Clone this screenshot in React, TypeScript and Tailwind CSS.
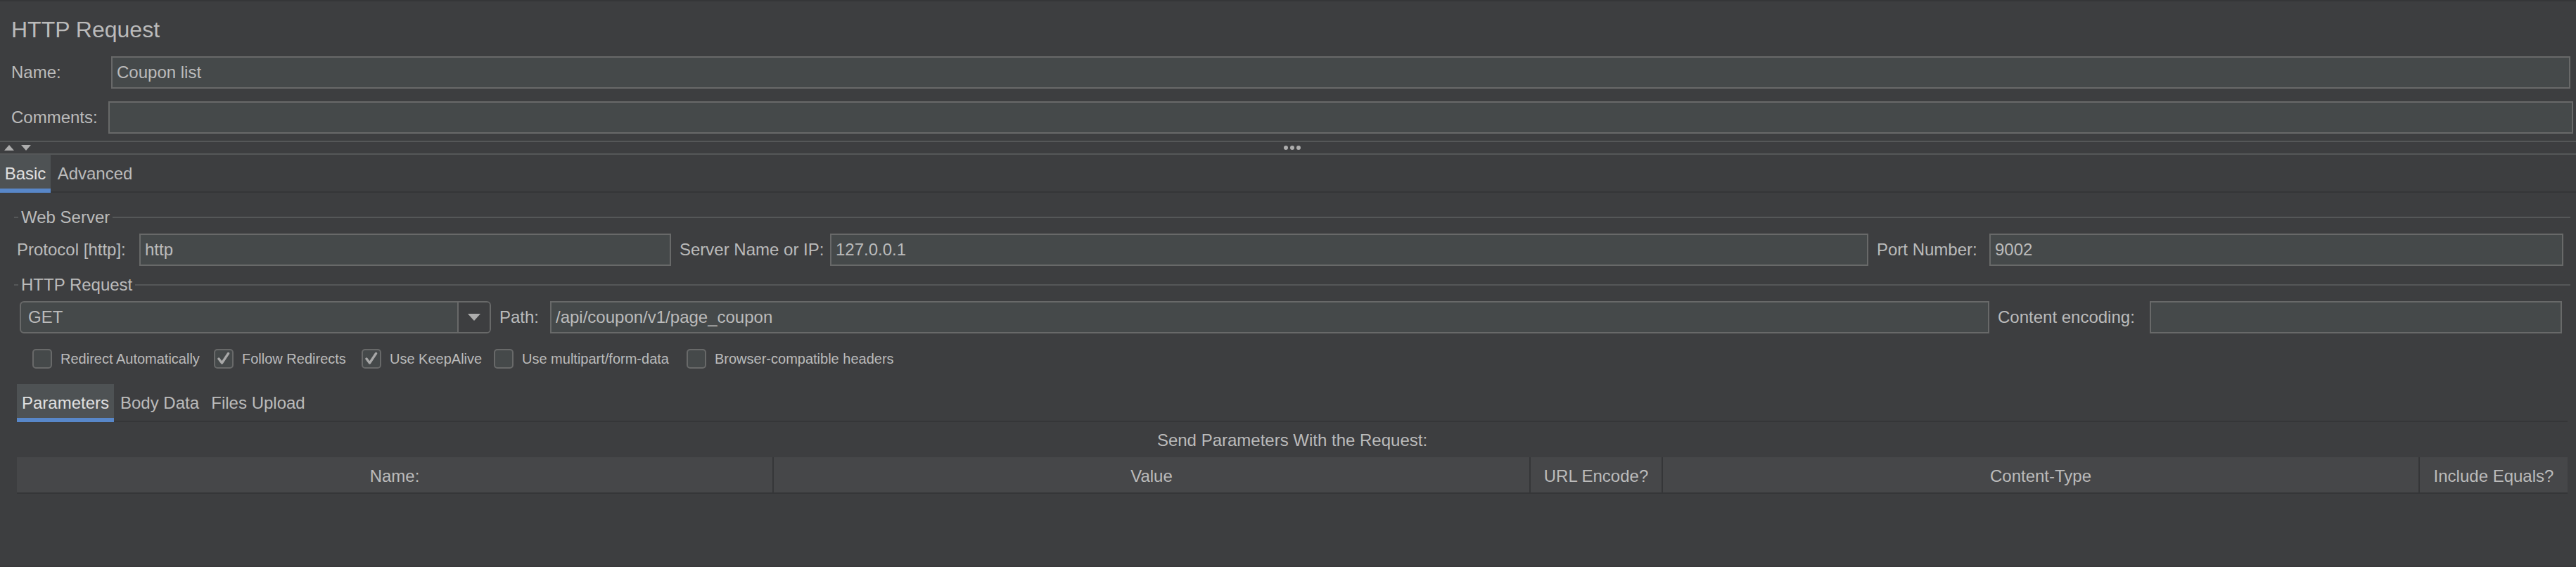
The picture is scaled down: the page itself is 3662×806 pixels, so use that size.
import { type ReactNode } from "react";

const field =
  "block h-[46px] w-full min-w-0 rounded-none border-2 border-[#686969] bg-[#45494a] pl-[6px] text-[24px] leading-[28px] text-[#bbbbbb] outline-none";

function Triangle({ up = false }: { up?: boolean }) {
  return (
    <svg width="14" height="8" viewBox="0 0 14 8" aria-hidden="true">
      <path d={up ? "M7 0L14 8H0Z" : "M0 0H14L7 8Z"} fill="#adadad" />
    </svg>
  );
}

function Tab({ children, active = false }: { children: ReactNode; active?: boolean }) {
  return (
    <button
      type="button"
      role="tab"
      aria-selected={active}
      className={
        active
          ? "h-[54px] border-b-[6px] border-[#5887c9] bg-[#4e5254] pt-[6px] text-[#e0e0e0]"
          : "h-[54px] border-b-2 border-[#353638] pt-[2px] text-[#bbbbbb]"
      }
    >
      {children}
    </button>
  );
}

function Group({ title, children }: { title: string; children: ReactNode }) {
  return (
    <section className="px-5">
      <div className="flex h-7 items-center gap-1">
        <span className="h-[2px] w-[6px] bg-[#555758]" />
        <h2>{title}</h2>
        <span className="-mr-3 h-[2px] flex-1 bg-[#555758]" />
      </div>
      {children}
    </section>
  );
}

function Check({ label, checked = false }: { label: string; checked?: boolean }) {
  return (
    <label className="flex items-center gap-3 whitespace-nowrap">
      <span className="grid size-7">
        <input
          type="checkbox"
          defaultChecked={checked}
          className="peer col-start-1 row-start-1 size-7 appearance-none rounded-[5px] border-2 border-[#686969] bg-[#45494a]"
        />
        <svg
          className="pointer-events-none invisible col-start-1 row-start-1 peer-checked:visible"
          viewBox="0 0 28 28"
          aria-hidden="true"
        >
          <path d="M7 14L11.5 20L20.5 6.5" fill="none" stroke="#a8a8a8" strokeWidth="3.4" strokeLinecap="round" strokeLinejoin="round" />
        </svg>
      </span>
      {label}
    </label>
  );
}

const columns = ["Name:", "Value", "URL Encode?", "Content-Type", "Include Equals?"];

export default function App() {
  return (
    <main className="flex min-h-screen flex-col border-y-2 border-t-[#353638] border-b-[#39393b] bg-[#3d3e40] font-['Liberation_Sans',Arial,sans-serif] text-[24px] leading-[28px] text-[#bbbbbb]">
      <header className="pl-4">
        <h1 className="pt-5 pb-[18px] text-[32px] leading-[40px]">HTTP Request</h1>
        <div className="grid grid-cols-[142px_1fr] items-center pr-2">
          <label htmlFor="name">Name:</label>
          <input id="name" defaultValue="Coupon list" className={field} />
        </div>
        <div className="mt-[18px] grid grid-cols-[138px_1fr] items-center pr-1">
          <label htmlFor="comments">Comments:</label>
          <input id="comments" className={field} />
        </div>
      </header>

      <div className="mt-[10px] grid h-5 grid-cols-[1fr_auto_1fr] items-center border-y-2 border-[#555758]">
        <div className="flex gap-[10px] pl-[6px]">
          <button type="button" aria-label="Collapse"><Triangle up /></button>
          <button type="button" aria-label="Expand"><Triangle /></button>
        </div>
        <div className="flex gap-[3px] pl-[12px]">
          <span className="size-[6px] rounded-full bg-[#adadad]" />
          <span className="size-[6px] rounded-full bg-[#adadad]" />
          <span className="size-[6px] rounded-full bg-[#adadad]" />
        </div>
        <span />
      </div>

      <div role="tablist" className="grid grid-cols-[72px_126px_1fr]">
        <Tab active>Basic</Tab>
        <Tab>Advanced</Tab>
        <span className="border-b-2 border-[#353638]" />
      </div>

      <div className="mt-[21px]">
        <Group title="Web Server">
          <div className="-mr-[2px] mt-[9px] grid grid-cols-[178px_756fr_226px_1476fr_172px_816fr] items-center">
            <label htmlFor="protocol" className="pl-1">Protocol [http]:</label>
            <input id="protocol" defaultValue="http" className={field} />
            <label htmlFor="server" className="pl-3">Server Name or IP:</label>
            <input id="server" defaultValue="127.0.0.1" className={field} />
            <label htmlFor="port" className="pl-3">Port Number:</label>
            <input id="port" defaultValue="9002" className={field} />
          </div>
        </Group>
      </div>

      <div className="mt-[13px]">
        <Group title="HTTP Request">
          <div className="mt-[9px] grid grid-cols-[670fr_84px_2046fr_228px_586fr] items-center pl-2">
            <div className="grid">
              <select
                aria-label="Method"
                className="col-start-1 row-start-1 h-[46px] w-full appearance-none rounded-[6px] border-2 border-[#686969] bg-[#45494a] pl-[10px] text-[24px] text-[#bbbbbb] outline-none"
              >
                <option>GET</option>
                <option>POST</option>
              </select>
              <span className="pointer-events-none col-start-1 row-start-1 my-[2px] mr-[2px] grid w-[46px] place-items-center justify-self-end rounded-r-[4px] border-l-2 border-[#686969] bg-[#3d3e40]">
                <svg width="18" height="10" viewBox="0 0 18 10" aria-hidden="true">
                  <path d="M0 0H18L9 10Z" fill="#adadad" />
                </svg>
              </span>
            </div>
            <label htmlFor="path" className="pl-3">Path:</label>
            <input id="path" defaultValue="/api/coupon/v1/page_coupon" className={field} />
            <label htmlFor="encoding" className="pl-3">Content encoding:</label>
            <input id="encoding" className={field} />
          </div>
          <div className="mt-[22px] grid grid-cols-[258px_210px_188px_274px_auto] justify-start pl-[26px] text-[20px]">
            <Check label="Redirect Automatically" />
            <Check label="Follow Redirects" checked />
            <Check label="Use KeepAlive" checked />
            <Check label="Use multipart/form-data" />
            <Check label="Browser-compatible headers" />
          </div>
        </Group>
      </div>

      <section className="mt-[22px] mr-3 ml-6">
        <div role="tablist" className="grid grid-cols-[138px_130px_150px_1fr]">
          <Tab active>Parameters</Tab>
          <Tab>Body Data</Tab>
          <Tab>Files Upload</Tab>
          <span className="border-b-2 border-[#353638]" />
        </div>
        <table className="w-full table-fixed border-separate border-spacing-0">
          <caption className="h-[50px] pt-3">Send Parameters With the Request:</caption>
          <colgroup>
            <col />
            <col />
            <col className="w-[188px]" />
            <col />
            <col className="w-[210px]" />
          </colgroup>
          <thead>
            <tr>
              {columns.map((c) => (
                <th
                  key={c}
                  scope="col"
                  className="h-[52px] border-r-2 border-b-2 border-[#353638] bg-[#464749] px-0 pt-1 pb-0 font-normal last:border-r-0"
                >
                  {c}
                </th>
              ))}
            </tr>
          </thead>
        </table>
      </section>
    </main>
  );
}
